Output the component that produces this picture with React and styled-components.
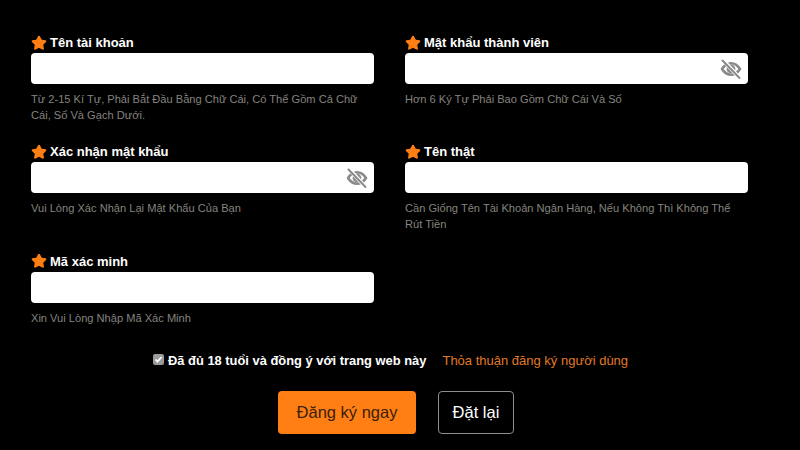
import React from 'react';
import styled, { createGlobalStyle } from 'styled-components';
import { Star } from 'lucide-react';

const GlobalStyle = createGlobalStyle`
  html, body {
    margin: 0;
    background: #000;
    font-family: "Liberation Sans", Arial, sans-serif;
  }
`;

const Page = styled.div`
  width: 800px;
  height: 450px;
  overflow: hidden;
  padding: 34px 0 0 31px;
  box-sizing: border-box;
  background: #000;
`;

const FormGrid = styled.div`
  display: grid;
  grid-template-columns: 343px 343px;
  grid-auto-rows: 109.25px;
  column-gap: 31px;
`;

const Field = styled.div`
  display: flex;
  flex-direction: column;
`;

const Label = styled.label`
  display: flex;
  align-items: center;
  gap: 3px;
  height: 17px;
  margin-bottom: 2px;
  font-size: 13px;
  font-weight: 700;
  color: #fff;
`;

const StarIcon = styled(Star)`
  width: 16px;
  height: 16px;
  color: #ff7f14;
  fill: #ff7f14;
  stroke-width: 2;
  stroke-linejoin: round;
`;

const InputWrap = styled.div`
  display: flex;
  align-items: center;
  height: 31px;
  background: #fff;
  border-radius: 4px;
`;

const Input = styled.input`
  flex: 1;
  min-width: 0;
  height: 100%;
  padding: 0 10px;
  border: none;
  outline: none;
  background: transparent;
  font-size: 13px;
`;

const EyeButton = styled.span`
  display: flex;
  margin-right: 6px;
`;

const Hint = styled.p`
  margin: 7px 0 0;
  font-size: 11.1px;
  line-height: 16px;
  color: #85837f;
`;

const AgreeRow = styled.div`
  display: flex;
  align-items: center;
  height: 20px;
  margin: -11px 0 0 122px;
`;

const CheckBox = styled.span`
  display: flex;
  align-items: center;
  justify-content: center;
  width: 11px;
  height: 11px;
  margin: -3px 4px 0 0;
  border-radius: 2px;
  background: #9a9a9a;
`;

const AgreeText = styled.span`
  font-size: 12.9px;
  font-weight: 700;
  color: #fff;
`;

const TermsLink = styled.a`
  margin-left: 16px;
  font-size: 13px;
  color: #e07a27;
`;

const Actions = styled.div`
  display: flex;
  gap: 22px;
  margin: 20px 0 0 247px;
`;

const Button = styled.button`
  height: 43px;
  padding: 0;
  border-radius: 4px;
  font-family: inherit;
  font-size: 16.5px;
  width: ${(p) => (p.$primary ? '138px' : '76px')};
  color: ${(p) => (p.$primary ? '#3a2008' : '#fff')};
  background: ${(p) => (p.$primary ? '#ff7f14' : '#000')};
  border: ${(p) => (p.$primary ? 'none' : '1px solid #8f8f8f')};
`;

const EyeOff = () => (
  <svg width="22" height="22" viewBox="0 0 22 22" fill="none">
    <path
      d="M2 11C4.500 7.200 7.500 5.300 11 5.300s6.500 1.900 9 5.700c-2.500 3.800-5.500 5.700-9 5.700s-6.500-1.900-9-5.700z"
      stroke="#8a8a8a"
      strokeWidth="2.600"
      strokeLinejoin="round"
    />
    <circle cx="11" cy="11" r="4.400" fill="#8a8a8a" />
    <path d="M3.500 2.500l15.500 17" stroke="#fff" strokeWidth="4" />
    <path d="M2.500 2.500l17 17.500" stroke="#8a8a8a" strokeWidth="2" strokeLinecap="round" />
  </svg>
);

const fields = [
  { label: 'Tên tài khoản', hint: 'Từ 2-15 Kí Tự, Phải Bắt Đầu Bằng Chữ Cái, Có Thể Gồm Cả Chữ Cái, Số Và Gạch Dưới.' },
  { label: 'Mật khẩu thành viên', hint: 'Hơn 6 Ký Tự Phải Bao Gồm Chữ Cái Và Số', secret: true },
  { label: 'Xác nhận mật khẩu', hint: 'Vui Lòng Xác Nhận Lại Mật Khẩu Của Bạn', secret: true },
  { label: 'Tên thật', hint: 'Cần Giống Tên Tài Khoản Ngân Hàng, Nếu Không Thì Không Thể Rút Tiền' },
  { label: 'Mã xác minh', hint: 'Xin Vui Lòng Nhập Mã Xác Minh' },
];

export default function App() {
  return (
    <Page>
      <GlobalStyle />
      <FormGrid>
        {fields.map((f) => (
          <Field key={f.label}>
            <Label>
              <StarIcon />
              {f.label}
            </Label>
            <InputWrap>
              <Input type={f.secret ? 'password' : 'text'} />
              {f.secret && (
                <EyeButton>
                  <EyeOff />
                </EyeButton>
              )}
            </InputWrap>
            <Hint>{f.hint}</Hint>
          </Field>
        ))}
      </FormGrid>
      <AgreeRow>
        <CheckBox>
          <svg width="9" height="9" viewBox="0 0 9 9" fill="none">
            <path d="M1.500 4.500l2 2.200 4-4.700" stroke="#fff" strokeWidth="1.800" />
          </svg>
        </CheckBox>
        <AgreeText>Đã đủ 18 tuổi và đồng ý với trang web này</AgreeText>
        <TermsLink>Thỏa thuận đăng ký người dùng</TermsLink>
      </AgreeRow>
      <Actions>
        <Button $primary>Đăng ký ngay</Button>
        <Button>Đặt lại</Button>
      </Actions>
    </Page>
  );
}
